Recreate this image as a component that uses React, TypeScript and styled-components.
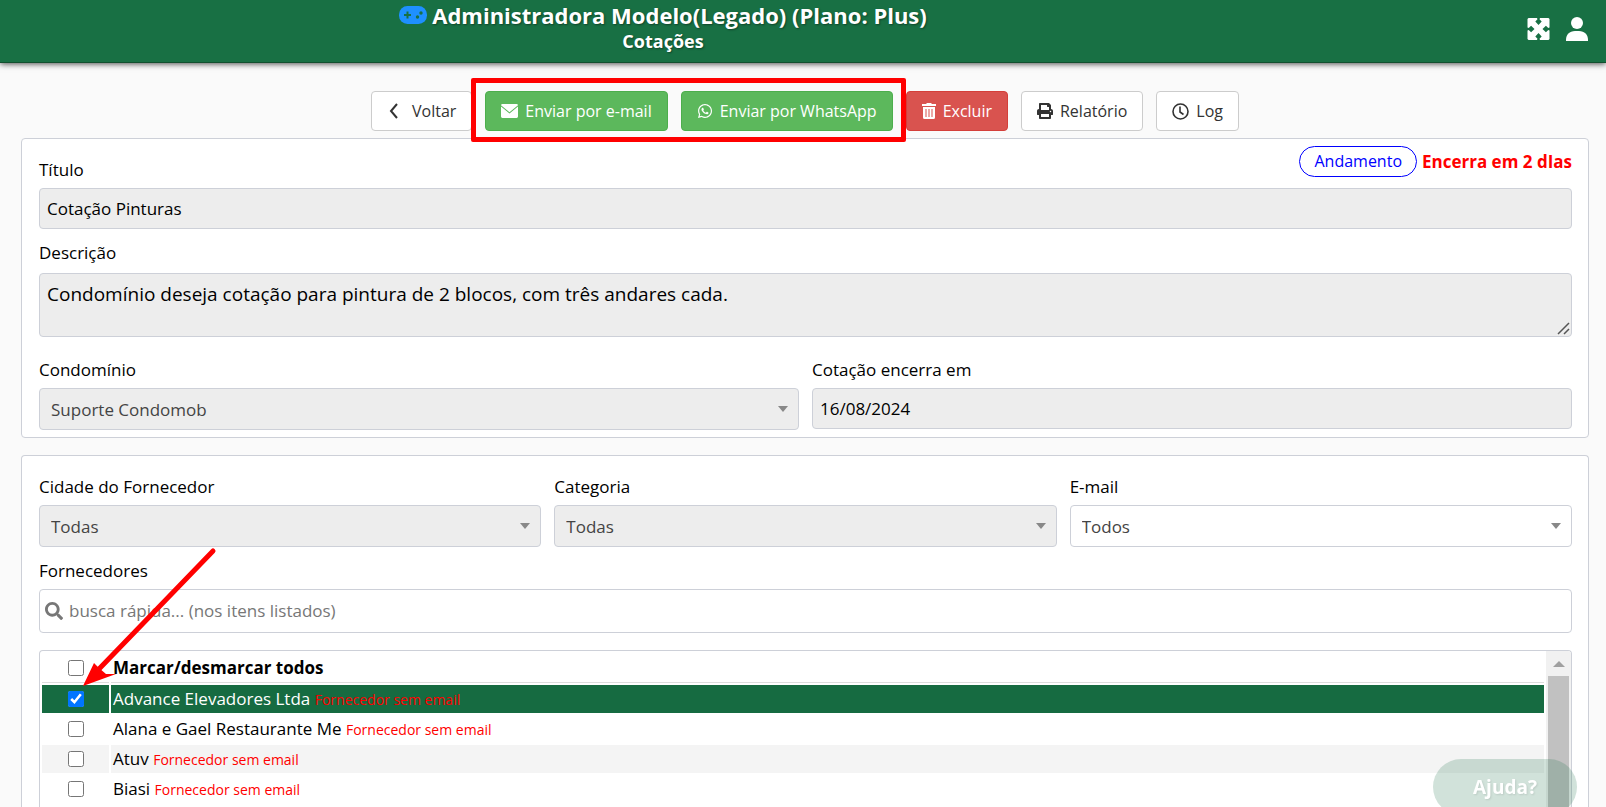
import React from 'react';
import styled, { createGlobalStyle, css } from 'styled-components';
import { FaSearch, FaWhatsapp, FaPrint } from 'react-icons/fa';

const GlobalStyle = createGlobalStyle`
  *, *::before, *::after { box-sizing: border-box; }
  body {
    margin: 0;
    background: #fafafa;
    color: #000;
    font: 17px/24px 'Open Sans', 'Noto Sans', sans-serif;
  }
  button, input, select, textarea { font: inherit; color: inherit; margin: 0; }
`;

const line = '#cdd0d8';

const Page = styled.div`
  height: 100vh;
  display: flex;
  flex-direction: column;
  overflow: hidden;
`;

const Header = styled.header`
  flex: none;
  display: flex;
  height: 63px;
  padding-right: 18px;
  background: #187044;
  color: #fff;
  border-bottom: 1px solid #12502f;
  box-shadow: 0 1px 6px rgba(0, 0, 0, 0.7);
`;

const HeaderTitles = styled.div`
  flex: 1;
  text-align: center;
`;

const AppTitle = styled.h1`
  display: flex;
  justify-content: center;
  align-items: center;
  gap: 5px;
  margin: 0;
  font-size: 22px;
  line-height: 30px;
  font-weight: 700;
  text-shadow: 1px 1px 2px rgba(0, 0, 0, 0.4);
  svg { color: #1e90ff; }
`;

const PageTitle = styled.h2`
  margin: 0;
  font-size: 18px;
  line-height: 22px;
  font-weight: 700;
  text-shadow: 1px 1px 2px rgba(0, 0, 0, 0.4);
`;

const HeaderActions = styled.nav`
  display: flex;
  justify-content: flex-end;
  align-items: center;
  gap: 16px;
  width: 262px;
  height: 58px;
`;

const IconButton = styled.button`
  display: flex;
  padding: 0;
  border: 0;
  background: none;
  color: #fff;
`;

const Content = styled.main`
  flex: 1;
  min-height: 0;
  display: flex;
  flex-direction: column;
  padding: 28px 17px 0 21px;
`;

const Toolbar = styled.div`
  display: flex;
  justify-content: center;
  gap: 13px;
  margin-bottom: 7px;
`;

const Highlighted = styled.div`
  position: relative;
  display: flex;
  gap: 13px;
`;

const HighlightFrame = styled.span`
  position: absolute;
  z-index: 2;
  inset: -13px -13px -11px -14px;
  border: 5px solid #f00;
  border-radius: 2px;
  pointer-events: none;
`;

const tones = {
  plain: css`background: #fff; border-color: #ccc; color: #333;`,
  success: css`background: #5cb85c; border-color: #4cae4c; color: #fff;`,
  danger: css`background: #d9534f; border-color: #d43f3a; color: #fff;`,
};

const Button = styled.button<{ $tone?: keyof typeof tones }>`
  display: flex;
  align-items: center;
  gap: 7px;
  height: 40px;
  padding: 0 15px;
  border: 1px solid;
  border-radius: 4px;
  font-size: 16px;
  white-space: nowrap;
  ${({ $tone = 'plain' }) => tones[$tone]}
`;

const Panel = styled.section<{ $fill?: boolean }>`
  position: relative;
  display: flex;
  flex-direction: column;
  padding: 17px 16px 7px 17px;
  background: #fff;
  border: 1px solid ${line};
  border-radius: 4px;
  ${({ $fill }) => $fill && css`
    flex: 1;
    min-height: 0;
    margin-top: 17px;
    padding-bottom: 0;
    border-bottom: 0;
    border-radius: 4px 4px 0 0;
  `}
`;

const Status = styled.div`
  position: absolute;
  top: 7px;
  right: 16px;
  display: flex;
  align-items: center;
  gap: 5px;
`;

const StatusPill = styled.span`
  padding: 1px 14px 2px;
  border: 1px solid #00f;
  border-radius: 16px;
  font-size: 16px;
  line-height: 26px;
  color: #00f;
`;

const Deadline = styled.strong`
  color: #f00;
`;

const FieldRow = styled.div`
  display: flex;
  gap: 13px;
`;

const Field = styled.div`
  flex: 1;
  min-width: 0;
  display: flex;
  flex-direction: column;
`;

const Label = styled.label<{ $gap?: number }>`
  margin-bottom: ${({ $gap = 6 }) => $gap}px;
  padding-top: 2px;
`;

const controlStyle = css`
  width: 100%;
  border: 1px solid ${line};
  border-radius: 4px;
  background: #fff;
  outline: 0;
`;

const TextInput = styled.input`
  ${controlStyle}
  height: 41px;
  padding: 0 7px;
  &:read-only { background: #ededed; }
`;

const TextAreaBox = styled.div`
  position: relative;
  svg {
    position: absolute;
    right: 2px;
    bottom: 2px;
    pointer-events: none;
  }
`;

const TextArea = styled.textarea`
  ${controlStyle}
  display: block;
  height: 64px;
  padding: 7px;
  font-size: 19px;
  line-height: 26px;
  background: #ededed;
  resize: none;
`;

const SelectBox = styled.div`
  position: relative;
  &::after {
    content: '';
    position: absolute;
    right: 11px;
    top: 18px;
    border: 5px solid transparent;
    border-top: 6px solid #888;
    border-bottom: 0;
    pointer-events: none;
  }
`;

const Select = styled.select`
  ${controlStyle}
  display: block;
  appearance: none;
  height: 42px;
  padding: 1px 30px 0 11px;
  color: #444;
  &:disabled { background: #ededed; opacity: 1; }
`;

const SearchBox = styled.div`
  ${controlStyle}
  flex: none;
  display: flex;
  align-items: center;
  gap: 6px;
  height: 44px;
  padding: 0 5px;
  color: #777;
`;

const SearchInput = styled.input`
  flex: 1;
  border: 0;
  outline: 0;
  padding: 0;
  background: none;
  &::placeholder { color: #777; opacity: 1; }
`;

const ListFrame = styled.div`
  flex: 1;
  min-height: 0;
  display: flex;
  margin-top: 17px;
  border: 1px solid ${line};
  border-bottom: 0;
  border-radius: 4px 4px 0 0;
  overflow: hidden;
`;

const ListArea = styled.div`
  flex: 1;
  min-width: 0;
`;

const SupplierTable = styled.table`
  width: 100%;
  table-layout: fixed;
  border-collapse: separate;
  border-spacing: 2px;
`;

const CheckColumn = styled.col`
  width: 67px;
`;

const HeadCell = styled.th`
  height: 30px;
  padding: 0 2px;
  border-bottom: 1px solid #ddd;
  text-align: left;
  font-weight: 700;
`;

const SupplierRow = styled.tr`
  &:nth-child(odd) td { background: #f4f4f4; }
  &[aria-selected='true'] td { background: #166b41; color: #fff; }
`;

const Cell = styled.td`
  height: 28px;
  padding: 0 2px;
`;

const Checkbox = styled.input`
  display: block;
  width: 16px;
  height: 16px;
  margin: 0 auto;
  accent-color: #0075ff;
`;

const Warning = styled.span`
  font-size: 14px;
  color: #f00;
`;

const ScrollTrack = styled.div`
  width: 25px;
  display: flex;
  flex-direction: column;
  padding: 10px 2px 0;
  background: #f1f1f1;
`;

const ScrollUp = styled.span`
  align-self: center;
  border: 6px solid transparent;
  border-bottom-color: #a0a0a0;
  border-top: 0;
`;

const ScrollThumb = styled.span`
  flex: 1;
  margin-top: 9px;
  background: #c1c1c1;
`;

const Pointer = styled.svg`
  position: absolute;
  z-index: 2;
  left: 57px;
  top: 87px;
  pointer-events: none;
`;

const HelpButton = styled.button`
  position: fixed;
  right: 29px;
  bottom: -8px;
  width: 144px;
  height: 56px;
  border: 0;
  border-radius: 28px;
  background: rgba(24, 112, 68, 0.2);
  color: #fff;
  font-size: 19px;
  font-weight: 700;
  text-shadow: 1px 1px 2px rgba(0, 0, 0, 0.1);
`;

const Spaced = styled.div<{ $top: number }>`
  margin-top: ${({ $top }) => $top}px;
`;

const suppliers = [
  { name: 'Advance Elevadores Ltda', checked: true },
  { name: 'Alana e Gael Restaurante Me', checked: false },
  { name: 'Atuv', checked: false },
  { name: 'Biasi', checked: false },
];

const GamepadIcon = () => (
  <svg width="28" height="18" viewBox="0 0 28 18">
    <rect width="28" height="18" rx="8.500" fill="currentColor" />
    <path d="M8.500 5.500v7M5 9h7" stroke="#187044" strokeWidth="2" />
    <circle cx="18.500" cy="11" r="1.700" fill="#187044" />
    <circle cx="22" cy="7" r="1.700" fill="#187044" />
  </svg>
);

const ExpandIcon = () => (
  <svg width="23" height="22" viewBox="0 0 22 22" fill="currentColor">
    <path d="M1 0H9.500L10 1.200 7.800 3.600 11 7 14.200 3.600 12 1.200 12.500 0H21L22 1V9.500L20.800 10 18.400 7.800 15 11 18.400 14.200 20.800 12 22 12.500V21L21 22H12.500L12 20.800 14.200 18.400 11 15 7.800 18.400 10 20.800 9.500 22H1L0 21V12.500L1.200 12 3.600 14.200 7 11 3.600 7.800 1.200 10 0 9.500V1z" />
  </svg>
);

const PersonIcon = () => (
  <svg width="22" height="24" viewBox="0 0 22 24" fill="currentColor">
    <circle cx="11" cy="6" r="6" />
    <path d="M0 24v-1C0 17.500 3.500 14 9 14h4c5.500 0 9 3.500 9 9v1z" />
  </svg>
);

const ChevronIcon = () => (
  <svg width="18" height="18" viewBox="0 0 18 18" fill="none" stroke="currentColor" strokeWidth="2">
    <path d="M10 2 4 9l6 7" />
  </svg>
);

const MailIcon = () => (
  <svg width="17" height="14" viewBox="0 0 17 14" fill="currentColor">
    <path d="M0 1.200Q.2 0 1.400 0h14.200q1.200 0 1.400 1.200L8.500 8.200z" />
    <path d="M0 2.600 8.500 9.600 17 2.600V12.600Q17 14 15.600 14H1.400Q0 14 0 12.600z" />
  </svg>
);

const TrashIcon = () => (
  <svg width="14" height="16" viewBox="0 0 14 16" fill="currentColor">
    <path d="M4.500 0h5v1H14v2H0V1h4.500z" />
    <path fillRule="evenodd" d="M1 4h12v10.500q0 1.500-1.500 1.500h-9Q1 16 1 14.500zM3.500 6v8h1V6zM6.500 6v8h1V6zM9.500 6v8h1V6z" />
  </svg>
);

const ClockIcon = () => (
  <svg width="17" height="17" viewBox="0 0 17 17" fill="none" stroke="currentColor" strokeWidth="1.600">
    <circle cx="8.500" cy="8.500" r="7.500" />
    <path d="M8 3.500V9l3.500 2.500" />
  </svg>
);

const ResizeGrip = () => (
  <svg width="13" height="13" viewBox="0 0 13 13" stroke="#555" strokeWidth="1.500">
    <path d="M1 12 12 1M7 12l5-5" />
  </svg>
);

function SelectField({ id, label, value, disabled }: {
  id: string; label: string; value: string; disabled?: boolean;
}) {
  return (
    <Field>
      <Label htmlFor={id}>{label}</Label>
      <SelectBox>
        <Select id={id} disabled={disabled} defaultValue={value}>
          <option>{value}</option>
        </Select>
      </SelectBox>
    </Field>
  );
}

export default function App() {
  return (
    <Page>
      <GlobalStyle />
      <Header>
        <HeaderTitles>
          <AppTitle><GamepadIcon />Administradora Modelo(Legado) (Plano: Plus)</AppTitle>
          <PageTitle>Cotações</PageTitle>
        </HeaderTitles>
        <HeaderActions>
          <IconButton aria-label="Tela cheia"><ExpandIcon /></IconButton>
          <IconButton aria-label="Perfil"><PersonIcon /></IconButton>
        </HeaderActions>
      </Header>
      <Content>
        <Toolbar>
          <Button><ChevronIcon />Voltar</Button>
          <Highlighted>
            <Button $tone="success"><MailIcon />Enviar por e-mail</Button>
            <Button $tone="success"><FaWhatsapp size={16} />Enviar por WhatsApp</Button>
            <HighlightFrame />
          </Highlighted>
          <Button $tone="danger"><TrashIcon />Excluir</Button>
          <Button><FaPrint size={16} />Relatório</Button>
          <Button><ClockIcon />Log</Button>
        </Toolbar>
        <Panel>
          <Status>
            <StatusPill>Andamento</StatusPill>
            <Deadline>Encerra em 2 dIas</Deadline>
          </Status>
          <Field>
            <Label htmlFor="titulo">Título</Label>
            <TextInput id="titulo" readOnly defaultValue="Cotação Pinturas" />
          </Field>
          <Spaced $top={10}>
            <Field>
              <Label htmlFor="descricao" $gap={8}>Descrição</Label>
              <TextAreaBox>
                <TextArea id="descricao" readOnly defaultValue="Condomínio deseja cotação para pintura de 2 blocos, com três andares cada." />
                <ResizeGrip />
              </TextAreaBox>
            </Field>
          </Spaced>
          <Spaced $top={19}>
            <FieldRow>
              <SelectField id="condominio" label="Condomínio" value="Suporte Condomob" disabled />
              <Field>
                <Label htmlFor="encerra">Cotação encerra em</Label>
                <TextInput id="encerra" readOnly defaultValue="16/08/2024" />
              </Field>
            </FieldRow>
          </Spaced>
        </Panel>
        <Panel $fill>
          <FieldRow>
            <SelectField id="cidade" label="Cidade do Fornecedor" value="Todas" disabled />
            <SelectField id="categoria" label="Categoria" value="Todas" disabled />
            <SelectField id="email" label="E-mail" value="Todos" />
          </FieldRow>
          <Spaced $top={10}>
            <Field>
              <Label htmlFor="busca">Fornecedores</Label>
              <SearchBox>
                <FaSearch size={18} />
                <SearchInput id="busca" placeholder="busca rápida... (nos itens listados)" />
              </SearchBox>
            </Field>
          </Spaced>
          <ListFrame>
            <ListArea>
              <SupplierTable>
                <colgroup><CheckColumn /><col /></colgroup>
                <thead>
                  <tr>
                    <HeadCell><Checkbox type="checkbox" id="todos" /></HeadCell>
                    <HeadCell><label htmlFor="todos">Marcar/desmarcar todos</label></HeadCell>
                  </tr>
                </thead>
                <tbody>
                  {suppliers.map((s, i) => (
                    <SupplierRow key={s.name} aria-selected={s.checked}>
                      <Cell><Checkbox type="checkbox" id={`s${i}`} defaultChecked={s.checked} /></Cell>
                      <Cell>
                        <label htmlFor={`s${i}`}>{s.name} <Warning>Fornecedor sem email</Warning></label>
                      </Cell>
                    </SupplierRow>
                  ))}
                </tbody>
              </SupplierTable>
            </ListArea>
            <ScrollTrack aria-hidden="true"><ScrollUp /><ScrollThumb /></ScrollTrack>
          </ListFrame>
          <Pointer width="140" height="150" viewBox="0 0 140 150" fill="#f00">
            <path d="M134 8 20 126" stroke="#f00" strokeWidth="5" strokeLinecap="round" />
            <path d="M4 143 15 120 20 125 27 131 37 131z" />
          </Pointer>
        </Panel>
      </Content>
      <HelpButton>Ajuda?</HelpButton>
    </Page>
  );
}
